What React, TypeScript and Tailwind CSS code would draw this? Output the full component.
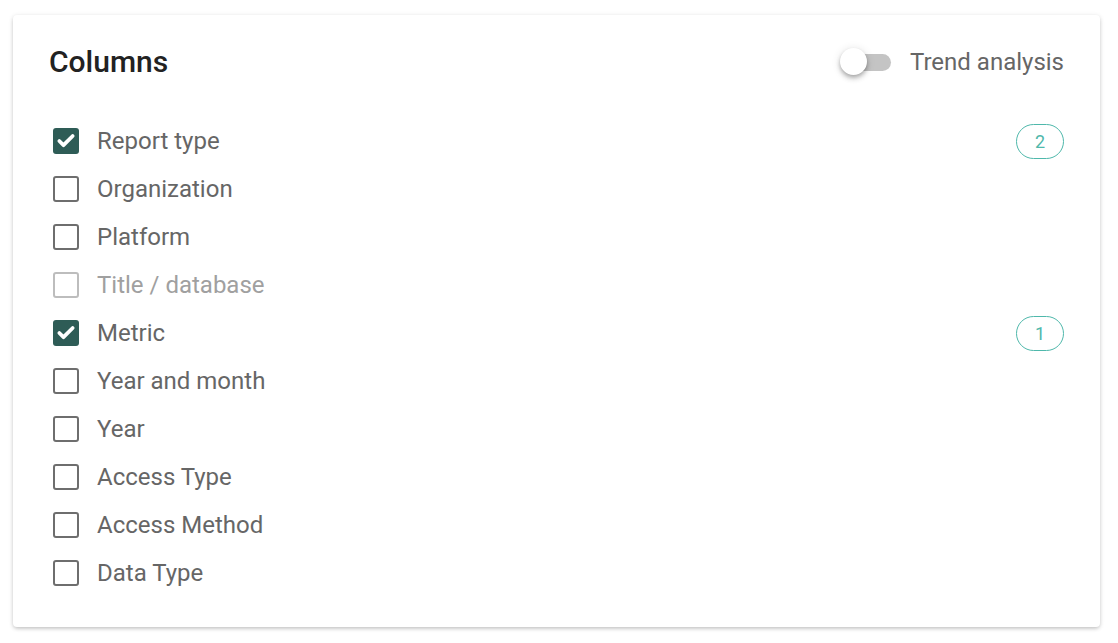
import { Check } from "lucide-react"

type Col = { label: string; checked?: boolean; disabled?: boolean; count?: number }

const columns: Col[] = [
  { label: "Report type", checked: true, count: 2 },
  { label: "Organization" },
  { label: "Platform" },
  { label: "Title / database", disabled: true },
  { label: "Metric", checked: true, count: 1 },
  { label: "Year and month" },
  { label: "Year" },
  { label: "Access Type" },
  { label: "Access Method" },
  { label: "Data Type" },
]

const CheckBox = ({ checked, disabled }: { checked?: boolean; disabled?: boolean }) => {
  if (checked) {
    return (
      <span className="w-[26px] h-[26px] rounded-[3px] bg-[#2e5c56] flex items-center justify-center">
        <Check size={20} strokeWidth={4.5} className="text-white" />
      </span>
    )
  }
  return (
    <span
      className={`w-[26px] h-[26px] rounded-[3px] border-[2.5px] ${
        disabled ? "border-[#bdbdbd]" : "border-[#6e6e6e]"
      }`}
    />
  )
}

export default function App() {
  return (
    <div className="font-['Roboto',sans-serif] min-h-screen bg-white pt-[15px] pl-[13px] pr-[18px]">
      <div className="bg-white rounded-[4px] shadow-[0_2px_4px_-1px_rgba(0,0,0,0.2),0_1px_5px_0_rgba(0,0,0,0.12)] h-[612px] px-9 pt-[27px]">
        <div className="flex items-center justify-between h-10">
          <h2 className="text-[30px] font-medium text-[#222] leading-none">Columns</h2>
          <div className="flex items-center gap-[19px]">
            <div className="relative w-[51px] h-[30px] flex items-center">
              <span className="ml-[4px] w-[47px] h-[17px] rounded-full bg-[#c4c4c4]" />
              <span className="absolute left-0 top-[1px] w-[27px] h-[27px] rounded-full bg-white shadow-[0_2px_4px_-1px_rgba(0,0,0,0.25),0_4px_5px_0_rgba(0,0,0,0.14),0_1px_10px_0_rgba(0,0,0,0.12)]" />
            </div>
            <span className="text-[24px] text-[#666]">Trend analysis</span>
          </div>
        </div>

        <ul className="mt-[35px] flex flex-col">
          {columns.map((c) => (
            <li key={c.label} className="h-12 flex items-center">
              <span className="w-[48px] flex items-center pl-[4px]">
                <CheckBox checked={c.checked} disabled={c.disabled} />
              </span>
              <span className={`text-[24px] ${c.disabled ? "text-[#a0a0a0]" : "text-[#666]"}`}>{c.label}</span>
              {c.count !== undefined && (
                <span className="ml-auto w-12 h-[35px] rounded-full border border-[#4fb8ab] text-[#4fb8ab] text-[18px] flex items-center justify-center">
                  {c.count}
                </span>
              )}
            </li>
          ))}
        </ul>
      </div>
    </div>
  )
}
